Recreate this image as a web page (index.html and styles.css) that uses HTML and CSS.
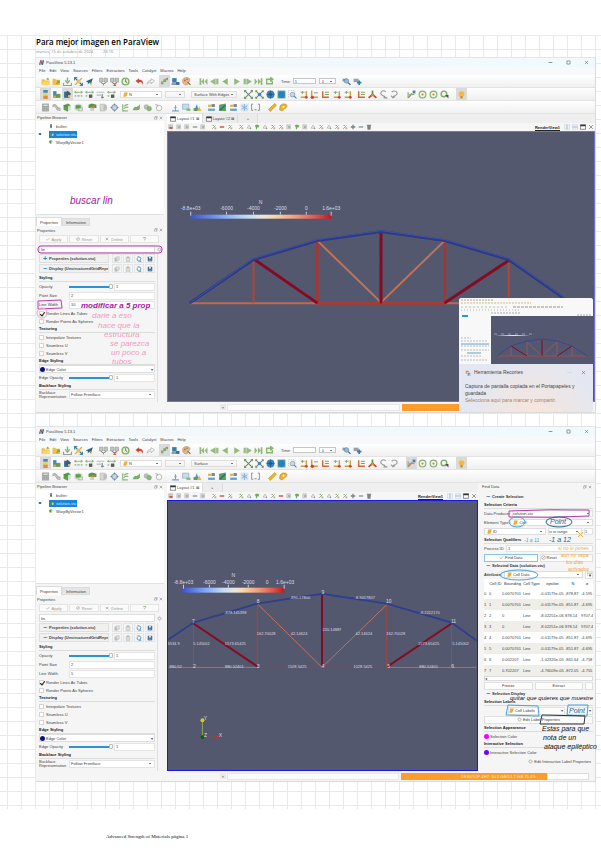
FILE: index.html
```html
<!DOCTYPE html>
<html lang="es">
<head>
<meta charset="utf-8">
<title>Para mejor imagen en ParaView</title>
<link rel="stylesheet" href="styles.css">
</head>
<body>
<svg class="defs" aria-hidden="true">
<defs>
<linearGradient id="coolwarm"><stop offset="0" stop-color="#3b55d0"/><stop offset=".22" stop-color="#7fa5f8"/><stop offset=".4" stop-color="#c3dcf2"/><stop offset=".52" stop-color="#ece6df"/><stop offset=".6" stop-color="#f8d5a8"/><stop offset=".75" stop-color="#f09a78"/><stop offset=".9" stop-color="#dd5145"/><stop offset="1" stop-color="#c41322"/></linearGradient>
<symbol id="i-logo" viewBox="0 0 16 16"><path d="M4 1h3L4 15H0z" fill="#b8342c"/><path d="M8 1h3L8 15H5z" fill="#2c8a3c"/><path d="M12 1h4l-3 14H9z" fill="#1f4e92"/></symbol>
<symbol id="i-open" viewBox="0 0 16 16"><path d="M1 4h5l1 2h8v8H1z" fill="#f3bf3e"/><path d="M1 14l3-6h12l-2 6z" fill="#ffd566"/><path d="M9 5l3-4 3 4z" fill="#7cae58"/></symbol>
<symbol id="i-recent" viewBox="0 0 16 16"><path d="M1 3h5l1 2h7v9H1z" fill="#f3bf3e"/><path d="M8 12l5-5m0 4V7H9" stroke="#76a850" stroke-width="2" fill="none"/></symbol>
<symbol id="i-save" viewBox="0 0 16 16"><path d="M8 1v7M4 6l4 5 4-5" stroke="#8eb07c" stroke-width="2.5" fill="none"/><path d="M1 10v5h14v-5" stroke="#9aa09a" stroke-width="2" fill="none"/></symbol>
<symbol id="i-state" viewBox="0 0 16 16"><path d="M2 2l4 4M14 14l-4-4" stroke="#37729c" stroke-width="2.5"/><path d="M14 2l-4 4M2 14l4-4" stroke="#e6a73b" stroke-width="2.5"/><circle cx="8" cy="8" r="3.5" fill="#f0bd55"/><path d="M1 6V1h5M15 10v5h-5" stroke="#4785aa" fill="none" stroke-width="2"/></symbol>
<symbol id="i-catalyst" viewBox="0 0 16 16"><path d="M1 8l13-6-3 9-3-1-3 3V9z" fill="#2a6180"/><path d="M8 10l3 5 1-7z" fill="#7eb24c"/></symbol>
<symbol id="i-server" viewBox="0 0 16 16"><path d="M1 2h6v7H1zM9 2h6v7H9z" fill="#c3c6c3" stroke="#8b908b"/><path d="M4 9q0 3 4 3t4-3M8 12v3" stroke="#7f857f" fill="none" stroke-width="1.5"/></symbol>
<symbol id="i-serveroff" viewBox="0 0 16 16"><path d="M1 2h6v7H1zM9 2h6v7H9z" fill="#c3c6c3" stroke="#8b908b"/><path d="M4 9q0 3 4 3t4-3" stroke="#7f857f" fill="none" stroke-width="1.5"/><path d="M6 11l5 4m0-4l-5 4" stroke="#c9604e" stroke-width="2"/></symbol>
<symbol id="i-clock" viewBox="0 0 16 16"><circle cx="8" cy="8" r="6" fill="#e8f1e0" stroke="#85ad68" stroke-width="2.5"/><path d="M8 4v4l3 2" stroke="#6c955a" stroke-width="2" fill="none"/></symbol>
<symbol id="i-undo" viewBox="0 0 16 16"><path d="M1 7l6-5v3c6 0 8 3 7 9-1-4-3-5-7-5v3z" fill="#cf4631"/></symbol>
<symbol id="i-redo" viewBox="0 0 16 16"><path d="M15 7L9 3v3C4 6 2 9 2 13c2-3 4-4 7-4v3z" fill="none" stroke="#b5b8b5" stroke-width="1.5"/></symbol>
<symbol id="i-apply" viewBox="0 0 16 16"><path d="M2 8h4V4h5v5H6v4H2z" fill="#82a468"/><path d="M9 3l5-2v5z" fill="#78955e"/></symbol>
<symbol id="i-build" viewBox="0 0 16 16"><path d="M2 2h8v8H2z" fill="#3e7cae"/><path d="M1 14h8v-3H1z" fill="#7a8c9a"/><path d="M9 9h6v5H9z" fill="#3667a0"/></symbol>
<symbol id="i-palette" viewBox="0 0 16 16"><path d="M8 1c5 0 7 3 6 6-1 2-4 1-4 3s1 4-2 4C3 14 1 11 1 7s3-6 7-6z" fill="#e2b98c" stroke="#b88d5e"/><circle cx="5" cy="6" r="1.5" fill="#d65545"/><circle cx="9" cy="4" r="1.5" fill="#5a9b54"/><path d="M10 9l5 5" stroke="#766653" stroke-width="2"/></symbol>
<symbol id="i-first" viewBox="0 0 16 16"><path d="M1 2h3v12H1zM9 2v12L4 8zM15 2v12L10 8z" fill="#8fbb7a"/></symbol>
<symbol id="i-prev" viewBox="0 0 16 16"><path d="M10 2v12L0 8zM11 3h4v10h-4z" fill="#95bd82"/></symbol>
<symbol id="i-back" viewBox="0 0 16 16"><path d="M12 2v12L2 8z" fill="#8fbb7a"/></symbol>
<symbol id="i-play" viewBox="0 0 16 16"><path d="M4 2v12l10-6z" fill="#8fbb7a"/></symbol>
<symbol id="i-next" viewBox="0 0 16 16"><path d="M6 2v12l10-6zM1 3h4v10H1z" fill="#95bd82"/></symbol>
<symbol id="i-last" viewBox="0 0 16 16"><path d="M12 2h3v12h-3zM7 2v12l5-6zM1 2v12l5-6z" fill="#8fbb7a"/></symbol>
<symbol id="i-loop" viewBox="0 0 16 16"><path d="M12 4H3v8h10V7M10 1v6l4-3z" stroke="#8ab374" stroke-width="2.5" fill="none"/></symbol>
<symbol id="i-zoomcam" viewBox="0 0 16 16"><path d="M1 3h8v5H1z" fill="#8d9aa4"/><circle cx="8" cy="7" r="4" fill="#8ebbd8" stroke="#5e7d93"/><path d="M11 10l4 4" stroke="#3f6e98" stroke-width="2.5"/></symbol>
<symbol id="i-zoomadd" viewBox="0 0 16 16"><path d="M1 3h9v6H1z" fill="#95a3ad"/><path d="M11 6v8M7 10h8" stroke="#377db5" stroke-width="3"/></symbol>
<symbol id="i-legend" viewBox="0 0 16 16"><path d="M4 0h8v5H4z" fill="#3f8bc8"/><path d="M4 5h8v5H4z" fill="#e7d45c"/><path d="M4 10h8v6H4z" fill="#e28b3c"/></symbol>
<symbol id="i-mapedit" viewBox="0 0 16 16"><path d="M2 2h6v12H2z" fill="#4288c0"/><path d="M6 7h9v7H6z" fill="#6d9a4a"/><path d="M2 10h5v4H2z" fill="#dba940"/></symbol>
<symbol id="i-mapcopy" viewBox="0 0 16 16"><path d="M2 3h9v11H2z" fill="#346a9c"/><path d="M7 1l7 5-3 8-5-5z" fill="#4b5663"/><path d="M9 9h4v4H9z" fill="#e5c25b"/></symbol>
<symbol id="i-range" viewBox="0 0 16 16"><path d="M1 4h14M4 2L1 4l3 2M12 2l3 2-3 2" stroke="#7daa70" stroke-width="1.5" fill="none"/><path d="M1 9h3v3H1zM6 9h4v3H6zM12 9h3v3h-3z" fill="#a6bd9c"/></symbol>
<symbol id="i-rangec" viewBox="0 0 16 16"><path d="M1 4h14M4 2L1 4l3 2M12 2l3 2-3 2" stroke="#84a878" stroke-width="1.5" fill="none"/><path d="M1 9h3v3H1z" fill="#a6bd9c"/><path d="M7 8h6v6H7z" fill="#555e5a"/></symbol>
<symbol id="i-ranget" viewBox="0 0 16 16"><path d="M1 4h14M1 9h8" stroke="#b6beb4" stroke-width="2"/><path d="M11 7v8M9 13h5" stroke="#7b8b95" stroke-width="2"/></symbol>
<symbol id="i-cell" viewBox="0 0 16 16"><path d="M5 2h9l-2 9-3 3H2l2-9z" fill="#f2b431" stroke="#c88c1d"/></symbol>
<symbol id="i-reset" viewBox="0 0 16 16"><path d="M2 2l12 12M14 2L2 14" stroke="#777f77" stroke-width="1.8"/><path d="M1 4V1h3M12 1h3v3M1 12v3h3M15 12v3h-3" stroke="#69a456" stroke-width="2" fill="none"/></symbol>
<symbol id="i-resetb" viewBox="0 0 16 16"><path d="M2 2l12 12M14 2L2 14" stroke="#6f7d7d" stroke-width="1.8"/><path d="M1 4V1h3M12 1h3v3M1 12v3h3M15 12v3h-3" stroke="#69a456" stroke-width="1.5" fill="none"/><circle cx="8" cy="8" r="3" fill="#3f86c1"/></symbol>
<symbol id="i-globe" viewBox="0 0 16 16"><circle cx="8" cy="8" r="7" fill="#3584bd"/><path d="M8 1v14M1 8h14" stroke="#255f8b" stroke-width="1.5"/><circle cx="8" cy="8" r="2.5" fill="#1d587f"/></symbol>
<symbol id="i-box" viewBox="0 0 16 16"><path d="M1 1h14v14H1z" fill="#5c9e91"/><circle cx="8" cy="8" r="6" fill="#287fc3"/></symbol>
<symbol id="i-rubber" viewBox="0 0 16 16"><path d="M1 1h11v11H1z" fill="none" stroke="#9aa5a5" stroke-dasharray="2"/><circle cx="8" cy="8" r="4" fill="#c8dae6" stroke="#6c8494"/><path d="M11 11l4 4" stroke="#4f84aa" stroke-width="2"/></symbol>
<symbol id="i-axr" viewBox="0 0 16 16"><path d="M13 2v11H3" stroke="#d0a037" stroke-width="2.5" fill="none"/><path d="M3 4h7M6 2v5" stroke="#75996a" stroke-width="1.5"/><circle cx="13" cy="13" r="2.5" fill="#cb4333"/></symbol>
<symbol id="i-axl" viewBox="0 0 16 16"><path d="M3 1v12h11" stroke="#d39b39" stroke-width="2.5" fill="none"/><path d="M7 5h7" stroke="#768f68" stroke-width="1.5"/><circle cx="4" cy="13" r="3" fill="#cb3f2f"/></symbol>
<symbol id="i-axy" viewBox="0 0 16 16"><path d="M3 2v11h11" stroke="#cb6a36" stroke-width="2.5" fill="none"/><path d="M7 4h7M7 8h7" stroke="#87a05f" stroke-width="2"/></symbol>
<symbol id="i-iso" viewBox="0 0 16 16"><path d="M8 8V1" stroke="#589a4a" stroke-width="3"/><path d="M8 8l7 6M8 8l-7 6" stroke="#c94830" stroke-width="3"/><path d="M5 11h6L8 6z" fill="#d69b36"/></symbol>
<symbol id="i-rotl" viewBox="0 0 16 16"><path d="M12 3C7-1 1 4 4 8s6 2 7 5M8 14h7" stroke="#929a92" stroke-width="2" fill="none"/></symbol>
<symbol id="i-rotr" viewBox="0 0 16 16"><path d="M3 4c5-5 12 0 9 4s-6 2-7 5M2 10l3 4 4-2" stroke="#9aa29a" stroke-width="2" fill="none"/></symbol>
<symbol id="i-axes" viewBox="0 0 16 16"><path d="M2 14l7-8" stroke="#ca7045" stroke-width="2.5"/><path d="M2 14V4M4 8h9" stroke="#86a972" stroke-width="2"/><path d="M10 1h5v5h-5z" fill="#567ba0"/></symbol>
<symbol id="i-center" viewBox="0 0 16 16"><circle cx="8" cy="8" r="6" fill="#eef4e8" stroke="#87ae72" stroke-width="2"/><circle cx="8" cy="8" r="2" fill="#d5864d"/></symbol>
<symbol id="i-pick" viewBox="0 0 16 16"><circle cx="7" cy="7" r="5" fill="#f2f6ee" stroke="#80ab6b" stroke-width="2.5"/><path d="M9 9h6v6z" fill="#45535a"/></symbol>
<symbol id="i-bulb" viewBox="0 0 16 16"><circle cx="8" cy="7" r="5" fill="#f3bc38"/><path d="M6 11h4v4H6z" fill="#b78c37"/><path d="M8 0v3M1 7h3M12 7h3" stroke="#f5d173" stroke-width="1.5"/></symbol>
<symbol id="i-calc" viewBox="0 0 16 16"><path d="M2 1h12v14H2z" fill="#9aa09c"/><path d="M4 3h8v2H4z" fill="#edf0ec"/><path d="M4 8h8M4 11h8M4 14h8" stroke="#d8ddd8" stroke-dasharray="2 1"/></symbol>
<symbol id="i-contour" viewBox="0 0 16 16"><path d="M1 3q5-3 8 2t6 3v6q-6 1-8-4T1 8z" fill="#a7aca8"/><path d="M3 5q5 0 6 4t5 3" stroke="#e0e3e0" fill="none"/></symbol>
<symbol id="i-clip" viewBox="0 0 16 16"><path d="M1 4l8-3 5 3-6 11-7-3z" fill="#5da050"/><path d="M8 6l6-2v8l-6 3z" fill="#d4dfd0"/><path d="M1 4l7 2v9" stroke="#39792f" fill="none"/></symbol>
<symbol id="i-slice" viewBox="0 0 16 16"><path d="M1 4l7-3 7 3v8l-7 3-7-3z" fill="#cbd8c7"/><path d="M3 4h9v6H3z" fill="#57a144"/><path d="M9 9h6v5H9z" fill="#dfe7dc" stroke="#93a391"/></symbol>
<symbol id="i-thresh" viewBox="0 0 16 16"><path d="M1 3l6-2 8 2v6H1z" fill="#4f9a42"/><path d="M4 8h7v6H4z" fill="#c8cfc5"/><path d="M7 5h5v4H7z" fill="#cc7c55"/></symbol>
<symbol id="i-extract" viewBox="0 0 16 16"><path d="M2 2h9v12H2z" fill="#d6d9d6" stroke="#a8ada8"/><path d="M8 4h6v8H8z" fill="#b8beb8"/></symbol>
<symbol id="i-glyph" viewBox="0 0 16 16"><circle cx="8" cy="8" r="5" fill="#c8d5df" stroke="#7a95a9" stroke-width="1.5"/><path d="M8 0l2 4H6zM8 16l2-4H6zM0 8l4-2v4zM16 8l-4-2v4z" fill="#6c8ca5"/></symbol>
<symbol id="i-stream" viewBox="0 0 16 16"><path d="M3 2v12h9M5 6q4-4 8-3M5 10q4-4 8-2" stroke="#8ab37c" stroke-width="2" fill="none"/></symbol>
<symbol id="i-warp" viewBox="0 0 16 16"><path d="M1 13q3-7 6-6t7-5v8q-2 3-6 3z" fill="#7eab6c"/></symbol>
<symbol id="i-group" viewBox="0 0 16 16"><circle cx="6" cy="7" r="4" fill="#b6cbae" stroke="#8ca083"/><circle cx="11" cy="10" r="4" fill="#8db77e" stroke="#7e9876"/></symbol>
<symbol id="i-level" viewBox="0 0 16 16"><circle cx="9" cy="9" r="5" fill="none" stroke="#b2b6b2" stroke-width="1.5"/><path d="M2 3h4v4" stroke="#a5b6a0" stroke-width="1.5" fill="none"/></symbol>
<symbol id="i-probe" viewBox="0 0 16 16"><path d="M2 14h12M8 14V4M6 8h4" stroke="#73a5c7" stroke-width="1.8"/></symbol>
<symbol id="i-plot" viewBox="0 0 16 16"><path d="M1 2h11v9H1z" fill="#c8dcea" stroke="#7ba1bd"/><path d="M8 10h7v4H8z" fill="#84b573"/></symbol>
<symbol id="i-hist" viewBox="0 0 16 16"><path d="M2 14L7 2l3 12z" fill="#3d8fcb"/><path d="M7 14l4-8 4 8z" fill="#e3b83f"/><path d="M1 14h5V9H1z" fill="#5fa04d"/></symbol>
<symbol id="i-time" viewBox="0 0 16 16"><path d="M2 10h12v4H2z" fill="#66a1c9"/><path d="M2 3h5v4H2z" fill="#deb04d"/><path d="M8 2h6v5H8z" fill="#7b7f80"/></symbol>
<symbol id="i-sel" viewBox="0 0 16 16"><path d="M2 3l12-2v13H2z" fill="#59a05b"/><path d="M3 13L13 4" stroke="#2b6a8b" stroke-width="2.5"/></symbol>
<symbol id="i-snow" viewBox="0 0 16 16"><path d="M1 1h14v14H1z" fill="#d7e5f0"/><path d="M8 2v12M3 5l10 6M13 5L3 11" stroke="#7aa9d0" stroke-width="1.5"/></symbol>
<symbol id="i-braces" viewBox="0 0 16 16"><path d="M4 2H1v11h3M12 2h3v11h-3M6 12h4" stroke="#77898f" stroke-width="1.5" fill="none"/></symbol>
<symbol id="i-ruler" viewBox="0 0 16 16"><path d="M1 11L12 1l3 3L4 15z" fill="#f0b429" stroke="#b98717"/></symbol>
<symbol id="i-protr" viewBox="0 0 16 16"><path d="M2 5q4-5 10-3 4 3 1 6l-8 6-4-2z" fill="#efb22b" stroke="#b98717"/><circle cx="8" cy="7" r="2" fill="#fff4d0"/></symbol>
<symbol id="i-sgrey" viewBox="0 0 16 16"><path d="M2 2h10v11H2z" fill="#dedede" stroke="#999"/><path d="M5 5h6v6H5z" fill="#a9b3ae"/></symbol>
<symbol id="i-sred" viewBox="0 0 16 16"><path d="M2 2h10v11H2z" fill="#d9c8c5" stroke="#998"/><path d="M4 8h8v5H4z" fill="#c3574c"/></symbol>
<symbol id="i-sbar" viewBox="0 0 16 16"><path d="M2 6h12v4H2z" fill="#95a0a5"/></symbol>
<symbol id="i-sminus" viewBox="0 0 16 16"><path d="M2 6h12v4H2z" fill="#c75d4c"/></symbol>
<symbol id="i-splus" viewBox="0 0 16 16"><path d="M8 2v12M2 8h12" stroke="#76858d" stroke-width="3.5"/></symbol>
<symbol id="i-sgreen" viewBox="0 0 16 16"><path d="M2 4l6-3 6 3-2 5H8v5H5V9z" fill="#6dac5c"/></symbol>
<symbol id="i-sarrow" viewBox="0 0 16 16"><path d="M3 13L12 4M4 4h4" stroke="#93b183" stroke-width="2.5"/><path d="M9 9h5v5H9z" fill="#c7aa9b"/></symbol>
<symbol id="i-sdots" viewBox="0 0 16 16"><path d="M3 11L8 3l5 8z" fill="none" stroke="#a0ad9b" stroke-width="1.8"/><circle cx="12" cy="12" r="2" fill="#8f9a8a"/></symbol>
<symbol id="i-strash" viewBox="0 0 16 16"><path d="M3 4h10l-1 11H4zM2 2h12v2H2z" fill="#7d8482"/></symbol>
<symbol id="i-copy" viewBox="0 0 16 16"><path d="M2 5h7v9H2z" fill="#c3c6c4" stroke="#a5a9a7"/><path d="M6 2h8v9H6z" fill="#dfe0e0" stroke="#a5a9a7"/></symbol>
<symbol id="i-paste" viewBox="0 0 16 16"><path d="M3 3h10v12H3z" fill="#d8dada" stroke="#a8acaa"/><path d="M6 1h4v4H6z" fill="#aeb2b0"/></symbol>
<symbol id="i-reload" viewBox="0 0 16 16"><path d="M4 2q8-1 9 5 0 6-5 7-6-1-5-7l2-3M9 14h5" stroke="#3b88bd" stroke-width="2.2" fill="none"/></symbol>
<symbol id="i-disk" viewBox="0 0 16 16"><path d="M2 2h12v12H2z" fill="#2d618f"/><path d="M5 2h6v5H5z" fill="#dbe6ef"/><path d="M4 9h8v5H4z" fill="#6c93b1"/></symbol>
<symbol id="i-eye" viewBox="0 0 16 16"><path d="M1 8q7-8 14 0-7 8-14 0z" fill="#4387ae"/><circle cx="8" cy="8" r="3" fill="#123b56"/></symbol>
<symbol id="i-srv" viewBox="0 0 16 16"><path d="M4 1h8v14H4z" fill="#666c6b"/><path d="M5 4h6M5 7h6" stroke="#e8e8e8"/></symbol>
<symbol id="i-gear" viewBox="0 0 16 16"><circle cx="8" cy="8" r="5" fill="none" stroke="#a4a8a8" stroke-width="3" stroke-dasharray="2 1"/><circle cx="8" cy="8" r="4" fill="none" stroke="#a4a8a8"/></symbol>
<symbol id="i-win" viewBox="0 0 16 16"><path d="M1 2h14v12H1z" fill="#fff" stroke="#333" stroke-width="1.5"/><path d="M1 2h14v4H1z" fill="#333"/></symbol>
<symbol id="i-float" viewBox="0 0 16 16"><path d="M2 5h8v8H2zM5 5V2h8v8h-3" fill="none" stroke="#777" stroke-width="1.5"/></symbol>
<symbol id="i-x" viewBox="0 0 16 16"><path d="M3 3l10 10M13 3L3 13" stroke="#666" stroke-width="1.8"/></symbol>
<symbol id="i-min" viewBox="0 0 16 16"><path d="M2 8h12" stroke="#555" stroke-width="2"/></symbol>
<symbol id="i-max" viewBox="0 0 16 16"><path d="M3 3h10v10H3z" fill="none" stroke="#555" stroke-width="1.8"/></symbol>
<symbol id="i-split" viewBox="0 0 16 16"><path d="M1 2h14v12H1z" fill="#edf2fa" stroke="#aebcd2"/><path d="M8 2v12" stroke="#8ea5c8" stroke-width="2"/></symbol>
<symbol id="i-splitv" viewBox="0 0 16 16"><path d="M1 2h14v12H1z" fill="#edf2fa" stroke="#aebcd2"/><path d="M1 8h14" stroke="#8ea5c8" stroke-width="2"/></symbol>
<symbol id="i-no" viewBox="0 0 16 16"><circle cx="8" cy="8" r="6" fill="none" stroke="#999" stroke-width="1.8"/><path d="M4 12l8-8" stroke="#999" stroke-width="1.8"/></symbol>
<symbol id="i-ok" viewBox="0 0 16 16"><path d="M2 8l4 5 8-10" fill="none" stroke="#8aa392" stroke-width="2"/></symbol>
<symbol id="i-snip" viewBox="0 0 16 16"><path d="M2 2h8v3H5v5H2z" fill="#e58a3c"/><path d="M7 7h7v3h-4v5H7z" fill="#3f8fc9"/><circle cx="13" cy="13" r="2" fill="#58a9c9"/></symbol>
</defs>
</svg>

<main class="sheet">
<header class="note-head">
<h1>Para mejor imagen en ParaView</h1>
<p><time>martes, 15 de octubre de 2024</time><time>23:16</time></p>
</header>

<section class="window" aria-label="ParaView 5.13.1">
<div class="titlebar"><svg><use href="#i-logo"/></svg><span>ParaView 5.13.1</span><div class="wincontrols" data-icons="min max x"></div></div>
<nav class="menu"><a href="#">File</a><a href="#">Edit</a><a href="#">View</a><a href="#">Sources</a><a href="#">Filters</a><a href="#">Extractors</a><a href="#">Tools</a><a href="#">Catalyst</a><a href="#">Macros</a><a href="#">Help</a></nav>
<div class="toolbar">
<div class="icons" data-icons="open recent save state catalyst | server serveroff clock | undo redo | apply* build palette || first prev back play next last loop ||"></div>
<label class="time">Time: <input value="1"></label><select class="s-step" aria-label="Paso"><option>0</option></select>
<div class="icons" data-icons="| zoomcam zoomadd"></div>
</div>
<div class="toolbar">
<div class="icons" data-icons="legend* mapedit mapcopy* range rangec ranget rangec |"></div>
<span class="with-icon s-array"><svg><use href="#i-cell"/></svg><select aria-label="Variable"><option>N</option></select></span>
<select class="s-comp" aria-label="Componente"><option></option></select>
<select class="s-repr" aria-label="Representación"><option>Surface With Edges</option></select>
<div class="icons" data-icons="|| reset resetb globe box rubber axr axl axy axr axr | axy iso rotl rotr || axes center center pick || bulb*"></div>
</div>
<div class="toolbar">
<div class="icons" data-icons="calc contour clip slice | thresh extract glyph stream warp group level || probe plot hist | time sel time snow braces || ruler protr"></div>
</div>
<div class="work">
<aside class="side">
<div class="dock">Pipeline Browser<svg><use href="#i-float"/></svg><svg><use href="#i-x"/></svg></div>
<ul class="tree">
<li><i></i><svg><use href="#i-srv"/></svg><span>builtin:</span></li>
<li class="on"><svg><use href="#i-eye"/></svg><b><svg><use href="#i-clip"/></svg>solution.vtu</b></li>
<li><i></i><svg><use href="#i-clip"/></svg><span>WarpByVector1</span></li>
</ul>
<div class="tabs"><button class="on">Properties</button><button>Information</button></div>
<div class="dock low">Properties<svg><use href="#i-float"/></svg><svg><use href="#i-x"/></svg></div>
<div class="actions"><button><svg><use href="#i-ok"/></svg>Apply</button><button><svg><use href="#i-no"/></svg>Reset</button><button><svg><use href="#i-x"/></svg>Delete</button><button class="help">?</button></div>
<div class="search"><input aria-label="Buscar" value="lin"><button aria-label="Avanzado"><svg><use href="#i-gear"/></svg></button></div>
<form class="props">
<div class="sect"><button type="button"><em>+</em>Properties (solution.vtu)</button><div data-icons="copy paste reload disk"></div></div>
<div class="sect"><button type="button"><em>−</em>Display (UnstructuredGridRepres</button><div data-icons="copy paste reload disk"></div></div>
<h3>Styling</h3>
<div class="row"><label for="op1">Opacity</label><input id="op1" type="range" value="100"><input aria-label="Valor" value="1"></div>
<div class="row wide"><label for="ps1">Point Size</label><input id="ps1" value="2"></div>
<div class="row wide"><label for="lw1">Line Width</label><input id="lw1" value="10"></div>
<label class="check"><input type="checkbox" checked>Render Lines As Tubes</label>
<label class="check"><input type="checkbox">Render Points As Spheres</label>
<h3>Texturing</h3>
<label class="check"><input type="checkbox">Interpolate Textures</label>
<label class="check"><input type="checkbox">Seamless U</label>
<label class="check"><input type="checkbox">Seamless V</label>
<h3>Edge Styling</h3>
<button type="button" class="color"><i></i>Edge Color<span>▾</span></button>
<div class="row"><label for="eo1">Edge Opacity</label><input id="eo1" type="range" value="100"><input aria-label="Valor" value="1"></div>
<h3>Backface Styling</h3>
<div class="row wide"><label for="bf1">Backface Representation</label><select id="bf1"><option>Follow Frontface</option></select></div>
</form>
<svg class="ink ink-left" viewBox="36 113 128 290">
<text x="70" y="203" class="mag big">buscar lin</text>
<rect x="38" y="245" width="124" height="7" rx="3" class="l-mag"/>
<path d="M38 300l23-1 1 8-24 1z" class="l-mag"/>
<text x="81" y="307" class="mag bold">modificar a 5 prop</text>
<ellipse cx="42" cy="312" rx="5" ry="5" class="l-pink"/>
<text x="92" y="317" class="pink">darle a eso</text><text x="98" y="327" class="pink">hace que la</text><text x="104" y="336" class="pink">estructura</text><text x="110" y="345" class="pink">se parezca</text><text x="111" y="354" class="pink">un poco a</text><text x="112" y="363" class="pink">tubos</text>
</svg>
</aside>
<div class="center">
<div class="layouts"><button class="on"><svg><use href="#i-win"/></svg>Layout #1 ⊠</button><button><svg><use href="#i-win"/></svg>Layout #2 ⊠</button><button>+</button></div>
<div class="viewbar"><div class="small" data-icons="sred sgrey sgrey sbar sgrey | sarrow sminus sarrow | sarrow sdots sgreen sdots sarrow sarrow sgrey sgreen sgrey sdots sarrow sdots sarrow sarrow splus sbar strash"></div><b>RenderView1</b><div class="small" data-icons="split splitv win x"></div></div>
<div class="view">
<svg viewBox="168 131 426 270">
<g class="scale"><rect x="190" y="214" width="141" height="4" fill="url(#coolwarm)"/><path d="M190 211v4M226 211v3M253 211v3M280 211v3M306 211v3M331 211v4" stroke="#c9ccd6"/>
<text x="260" y="203">N</text><text x="190" y="209">-8.8e+03</text><text x="226" y="209">-6000</text><text x="253" y="209">-4000</text><text x="280" y="209">-2000</text><text x="306" y="209">0</text><text x="331" y="209">1.6e+03</text></g>
<g fill="none" stroke-linecap="round">
<path d="M190 303h127M445 303h127" stroke="#bd6a53" stroke-width="2"/>
<path d="M317 303h128" stroke="#a53c36" stroke-width="3"/>
<path d="M253 259v43M509 260v42" stroke="#b04638" stroke-width="2"/>
<path d="M317 240v62M445 240v62" stroke="#a33832" stroke-width="3"/>
<path d="M317 240l64 62 64-62" stroke="#c2715a" stroke-width="2"/>
<path d="M254 259l62 43M509 260l-63 42M381 232v70" stroke="#850b22" stroke-width="3"/>
<path d="M190 302l63-43 64-19 64-9 64 9 64 19 63 44" stroke="#2c3a83" stroke-width="3"/>
<path d="M190 302l63-44 64-19 64-9 64 9 64 19 63 44" stroke="#4051aa" stroke-width="1"/>
</g>
</svg>
</div>
</div>
</div>
<div class="status"><button aria-label="Cerrar">×</button><div class="track"></div><div class="memory full"></div></div>
<div class="toast" role="status">
<svg class="thumb" viewBox="0 0 134 66" preserveAspectRatio="none">
<path d="M0 0h134v66H0z" fill="#f8f8f9"/><path d="M32 18h102v48H32z" fill="#53576f"/>
<g fill="none" stroke-width="1"><path d="M2 5h70" stroke="#d7b97f" stroke-dasharray="2 1"/><path d="M2 9h48" stroke="#b9c4a6" stroke-dasharray="2 2"/><path d="M54 9h50" stroke="#b78f6f" stroke-dasharray="3 1"/><path d="M2 12h60" stroke="#a6bfac" stroke-dasharray="1 2"/><path d="M2 2h32M32 15h30M118 17h14" stroke="#aaa" stroke-dasharray="2 1"/><path d="M2 40h10M2 43h26M2 48h28M2 52h28M2 58h20M2 62h26" stroke="#b9bdc4" stroke-dasharray="2 1"/><path d="M2 46h28M8 55h14" stroke="#58a4d6"/></g>
<path d="M3 17h6v2H3z" fill="#2b94dc"/><path d="M36 37h36v1H36z" fill="url(#coolwarm)"/><path d="M35 36h38" stroke="#c5c9d5" stroke-dasharray="3 4" stroke-width=".6"/>
<g fill="none"><path d="M38 58h90" stroke="#a75149"/><path d="M52 48v10M68 44v14M98 44v14M113 48v10M68 44l15 14 15-14" stroke="#a25e59" stroke-width=".7"/><path d="M52 48l16 10M113 48L98 58M83 42v16" stroke="#850b22"/><path d="M38 58l14-10 16-5 15-2 15 2 15 5 15 10" stroke="#394791"/></g>
</svg>
<div class="toast-head"><svg><use href="#i-snip"/></svg><span>Herramienta Recortes</span><small>···</small><button aria-label="Cerrar aviso"><svg><use href="#i-x"/></svg></button></div>
<p>Captura de pantalla copiada en el Portapapeles y guardada</p>
<p class="hint">Selecciona aquí para marcar y compartir.</p>
</div>
</section>

<section class="window strong" aria-label="ParaView 5.13.1">
<div class="titlebar"><svg><use href="#i-logo"/></svg><span>ParaView 5.13.1</span><div class="wincontrols" data-icons="min max x"></div></div>
<nav class="menu"><a href="#">File</a><a href="#">Edit</a><a href="#">View</a><a href="#">Sources</a><a href="#">Filters</a><a href="#">Extractors</a><a href="#">Tools</a><a href="#">Catalyst</a><a href="#">Macros</a><a href="#">Help</a></nav>
<div class="toolbar">
<div class="icons" data-icons="open recent save state catalyst | server serveroff clock | undo redo | apply* build palette || first prev back play next last loop ||"></div>
<label class="time">Time: <input value=""></label><select class="s-step" aria-label="Paso"><option>0</option></select>
<div class="icons" data-icons="| zoomcam zoomadd"></div>
</div>
<div class="toolbar">
<div class="icons" data-icons="legend* mapedit mapcopy range rangec ranget rangec |"></div>
<span class="with-icon s-array"><svg><use href="#i-cell"/></svg><select aria-label="Variable"><option>N</option></select></span>
<select class="s-comp" aria-label="Componente"><option></option></select>
<select class="s-repr" aria-label="Representación"><option>Surface</option></select>
<div class="icons" data-icons="|| reset resetb globe box rubber axr axl axy axr axr | axy iso rotl rotr || axes* center center pick || bulb*"></div>
</div>
<div class="toolbar">
<div class="icons" data-icons="calc contour clip slice | thresh extract glyph stream warp group level || probe plot hist | time sel time snow braces || ruler protr"></div>
</div>
<div class="work">
<aside class="side">
<div class="dock">Pipeline Browser<svg><use href="#i-float"/></svg><svg><use href="#i-x"/></svg></div>
<ul class="tree">
<li><i></i><svg><use href="#i-srv"/></svg><span>builtin:</span></li>
<li class="on"><svg><use href="#i-eye"/></svg><b><svg><use href="#i-clip"/></svg>solution.vtu</b></li>
<li><i></i><svg><use href="#i-clip"/></svg><span>WarpByVector1</span></li>
</ul>
<div class="tabs"><button class="on">Properties</button><button>Information</button></div>
<div class="dock low">Properties<svg><use href="#i-float"/></svg><svg><use href="#i-x"/></svg></div>
<div class="actions"><button><svg><use href="#i-ok"/></svg>Apply</button><button><svg><use href="#i-no"/></svg>Reset</button><button><svg><use href="#i-x"/></svg>Delete</button><button class="help">?</button></div>
<div class="search"><input aria-label="Buscar" value="lin"><button aria-label="Avanzado"><svg><use href="#i-gear"/></svg></button></div>
<form class="props">
<div class="sect"><button type="button"><em>−</em>Properties (solution.vtu)</button><div data-icons="copy paste reload disk"></div></div>
<div class="sect"><button type="button"><em>−</em>Display (UnstructuredGridRepres</button><div data-icons="copy paste reload disk"></div></div>
<h3>Styling</h3>
<div class="row"><label for="op2">Opacity</label><input id="op2" type="range" value="100"><input aria-label="Valor" value="1"></div>
<div class="row wide"><label for="ps2">Point Size</label><input id="ps2" value="2"></div>
<div class="row wide"><label for="lw2">Line Width</label><input id="lw2" value="5"></div>
<label class="check"><input type="checkbox" checked>Render Lines As Tubes</label>
<label class="check"><input type="checkbox">Render Points As Spheres</label>
<h3>Texturing</h3>
<label class="check"><input type="checkbox">Interpolate Textures</label>
<label class="check"><input type="checkbox">Seamless U</label>
<label class="check"><input type="checkbox">Seamless V</label>
<h3>Edge Styling</h3>
<button type="button" class="color"><i></i>Edge Color<span>▾</span></button>
<div class="row"><label for="eo2">Edge Opacity</label><input id="eo2" type="range" value="100"><input aria-label="Valor" value="1"></div>
<h3>Backface Styling</h3>
<div class="row wide"><label for="bf2">Backface Representation</label><select id="bf2"><option>Follow Frontface</option></select></div>
</form>
</aside>
<div class="center">
<div class="layouts"><button class="on"><svg><use href="#i-win"/></svg>Layout #1 ⊠</button><button>+</button></div>
<div class="viewbar"><div class="small" data-icons="sred sgrey sgrey sbar sgrey | sarrow sminus sarrow | sarrow sdots sgreen sdots sarrow sminus sgrey sgreen sgrey sdots sarrow sdots sarrow sarrow splus sbar strash"></div><b>RenderView1</b><div class="small" data-icons="split splitv win x"></div></div>
<div class="view">
<svg viewBox="168 501 309 270">
<g class="scale"><rect x="182" y="588" width="102" height="5" fill="url(#coolwarm)"/><path d="M183 585v4M209 585v3M228 585v3M248 585v3M284 585v4" stroke="#c9ccd6"/>
<text x="233" y="577">N</text><text x="183" y="584">-8.8e+03</text><text x="209" y="584">-6000</text><text x="228" y="584">-4000</text><text x="248" y="584">-2000</text><text x="267" y="584">0</text><text x="285" y="584">1.6e+03</text></g>
<g fill="none">
<path d="M168 668h90M388 668h89" stroke="#bd6a53" stroke-width="1"/>
<path d="M258 668h130" stroke="#a53c36" stroke-width="1"/>
<path d="M193 624v44M452 624v44M257 605v63M387 605v63" stroke="#ab4539" stroke-width="1"/>
<path d="M258 605l64 63 65-63" stroke="#c2715a" stroke-width="1"/>
<path d="M193 624l64 43M452 624l-64 43M322 595v72" stroke="#850b22" stroke-width="2"/>
<path d="M168 640l25-17 64-19 65-10 65 10 65 19 25 18" stroke="#2f3e90" stroke-width="2"/>
</g>
<g class="vals"><text x="235" y="614">-878.145398</text><text x="300" y="599">-890.17800</text><text x="365" y="599">-8.9017807</text><text x="430" y="614">-8.2222170</text><text x="173" y="646">3534.9</text><text x="201" y="646">5.145002</text><text x="235" y="646">1573.65425</text><text x="266" y="636">162.70028</text><text x="299" y="636">42.14624</text><text x="332" y="631">220.14887</text><text x="364" y="636">42.14624</text><text x="396" y="636">162.70028</text><text x="429" y="646">1573.65425</text><text x="461" y="646">5.145002</text><text x="175" y="669">880.52</text><text x="234" y="669">880.52401</text><text x="297" y="669">1528.5425</text><text x="363" y="669">1528.5425</text><text x="429" y="669">880.52401</text></g>
<g class="ids"><text x="193" y="623">7</text><text x="258" y="603">8</text><text x="323" y="594">9</text><text x="389" y="603">10</text><text x="454" y="623">11</text><text x="194" y="669">2</text><text x="258" y="669">3</text><text x="323" y="669">4</text><text x="389" y="669">5</text><text x="453" y="669">6</text></g>
<path d="M202 737v-16" stroke="#8ba650"/><path d="M202 738h16" stroke="#bd3838" stroke-dasharray="2 1"/><circle cx="202" cy="738" r="2" fill="#0c5a1c"/><circle cx="202" cy="721" r="2" fill="#d9c42f"/><path d="M216 736l4 2-4 2z" fill="#d02c2c"/>
<g class="ids"><text x="205" y="721">Y</text><text x="205" y="738">Z</text><text x="220" y="738">X</text></g>
</svg>
</div>
</div>
<aside class="find">
<div class="dock">Find Data<svg><use href="#i-float"/></svg><svg><use href="#i-x"/></svg></div>
<h2><em>−</em>Create Selection</h2>
<h3>Selection Criteria</h3>
<div class="line"><label for="dp">Data Producer</label><select id="dp"><option>solution.vtu</option></select></div>
<div class="line"><label for="et">Element Type</label><span class="with-icon"><svg><use href="#i-cell"/></svg><select id="et"><option>Cell</option></select></span></div>
<div class="line"><span class="with-icon"><svg><use href="#i-cell"/></svg><select aria-label="Campo"><option>ID</option></select></span><select class="rng" aria-label="Operador"><option>is in range</option></select><input class="tiny" aria-label="Mínimo" value="1"></div>
<h3>Selection Qualifiers</h3>
<div class="line"><label for="pid">Process ID</label><input id="pid" value="-1"></div>
<div class="line btns"><button class="hot"><svg><use href="#i-ok"/></svg>Find Data</button><button class="reset"><svg><use href="#i-no"/></svg>Reset</button></div>
<h2><em>−</em>Selected Data (solution.vtu)</h2>
<div class="line"><label for="at"><b>Attribute:</b></label><span class="with-icon"><svg><use href="#i-cell"/></svg><select id="at"><option>Cell Data</option></select></span><button class="sq" aria-label="Columnas"><svg><use href="#i-rangec"/></svg></button></div>
<div class="tablebox"><table>
<thead><tr><th></th><th>Cell ID</th><th>Bounding</th><th>Cell Type</th><th>epsilon</th><th>N</th><th>σ</th></tr></thead>
<tbody>
<tr><td>0</td><td>0</td><td>0.0070701</td><td>Line</td><td>-0.01179e-05</td><td>-878.87</td><td>-4.595</td></tr>
<tr><td>1</td><td>1</td><td>0.0070701</td><td>Line</td><td>-0.01179e-05</td><td>-851.87</td><td>-4.695</td></tr>
<tr><td>2</td><td>2</td><td>0</td><td>Line</td><td>-8.02251e-06</td><td>878.14</td><td>9707.4</td></tr>
<tr><td>3</td><td>3</td><td>0</td><td>Line</td><td>-8.02251e-06</td><td>878.14</td><td>9707.4</td></tr>
<tr><td>4</td><td>4</td><td>0.0070701</td><td>Line</td><td>-0.01179e-05</td><td>-851.87</td><td>-4.695</td></tr>
<tr><td>5</td><td>5</td><td>0.0070701</td><td>Line</td><td>-0.01179e-05</td><td>-851.87</td><td>-4.695</td></tr>
<tr><td>6</td><td>6</td><td>0.002207</td><td>Line</td><td>-1.02320e-05</td><td>-841.64</td><td>-4.758</td></tr>
<tr><td>7</td><td>7</td><td>0.702207</td><td>Line</td><td>-4.76009e-05</td><td>-872.05</td><td>-4.755</td></tr>
</tbody></table></div>
<div class="hscroll">◂</div>
<div class="line btns"><button>Freeze</button><button>Extract</button><button class="sq" aria-label="Más"></button></div>
<h2><em>−</em>Selection Display</h2>
<h3>Selection Labels</h3>
<div class="line labels"><button><svg><use href="#i-cell"/></svg>Cell Labels<span>▾</span></button><button aria-label="Etiquetas de punto"><span>▾</span></button></div>
<div class="line btns"><button><svg><use href="#i-gear"/></svg>Edit Label Properties</button></div>
<h3>Selection Appearance</h3>
<button class="swatch"><i class="magenta"></i>Selection Color</button>
<h3>Interactive Selection</h3>
<button class="swatch"><i class="violet"></i>Interactive Selection Color</button>
<button class="swatch right"><svg><use href="#i-gear"/></svg>Edit Interactive Label Properties</button>
<svg class="ink ink-right" viewBox="481 482 118 290">
<path d="M509 510q40-2 80-1v6q-40 2-80 1z" class="l-mag"/>
<ellipse cx="517" cy="521" rx="8" ry="5" class="l-blue"/><ellipse cx="559" cy="521" rx="13" ry="5" class="l-navy"/>
<text x="550" y="523" class="navy">Point</text><text x="524" y="541" class="blue">-1 a 11</text><text x="549" y="541" class="navy">-1 a 12</text>
<path d="M578 531l5 5m0-5l-5 5" class="l-gold"/>
<text x="558" y="549" class="gold">si no lo pones</text><text x="561" y="556" class="gold">aun no sepa</text><text x="566" y="563" class="gold">los días</text><text x="568" y="570" class="gold">activados</text>
<ellipse cx="519" cy="574" rx="19" ry="5" class="l-blue"/>
<text x="510" y="699" class="black">quitar que quieres que muestre</text>
<path d="M508 704l30 1 1 10-33-1z" class="l-blue"/><path d="M568 704h20l-1 11-20-1z" class="l-blue"/><text x="569" y="712" class="navy">Point</text>
<path d="M542 714l43 1-1 8h-44z" class="l-black"/>
<text x="542" y="730" class="black tall">Estas para que</text><text x="543" y="739" class="black tall">nota de un</text><text x="544" y="748" class="black tall">ataque epiléptico</text>
</svg>
</aside>
</div>
<div class="status"><button aria-label="Cerrar">×</button><div class="track"></div><div class="memory">DESKTOP-4H7: 10.3 GiB/13.7 GiB 75.4%</div><div class="rest"></div></div>
</section>
</main>
<footer>Advanced Strength of Materials página 1</footer>
<script src="bars.js"></script>
</body>
</html>
```
FILE: styles.css
```css
* { box-sizing: border-box; }
body { margin: 0; background: #fff; color: #444; font: 4px/5px "Liberation Sans", Arial, sans-serif; }
button, input, select { font: inherit; color: inherit; margin: 0; padding: 0; border: 0; border-radius: 0; background: none; min-width: 0; outline: 0; }
select { appearance: none; background: linear-gradient(#777, #777) right 3px center / 2px 1px no-repeat; }
h1, h2, h3, p, ul { margin: 0; padding: 0; }
a { color: inherit; text-decoration: none; }
svg { display: block; flex: none; }
.defs { position: absolute; width: 0; height: 0; }

.sheet {
  margin-top: 35px; padding: 1px 5px 27px 36px;
  display: flex; flex-direction: column;
  background-image: linear-gradient(#d8effa 1px, transparent 1px), linear-gradient(90deg, #d8effa 1px, transparent 1px);
  background-size: 14px 14px; background-position: 7px 0;
}
.note-head { height: 21px; }
h1 { font: 600 8px/12px "Open Sans", sans-serif; color: #000; }
.note-head p { display: flex; gap: 10px; font: 4px/8px "Open Sans", sans-serif; color: #888; }
footer { margin: 23px 0 7px 106px; font: 5px/10px "Liberation Serif", serif; color: #111; }

.window { position: relative; background: #f5f5f5; border: 1px solid #d8dbdc; border-width: 0 1px 1px 0; margin-bottom: 13px; }
.window:last-child { margin-bottom: 0; }
.titlebar { display: flex; align-items: center; height: 10px; padding-left: 3px; gap: 2px; background: linear-gradient(90deg, #f4f7f8, #f0fafe); border-top: 1px solid #dfe5e8; }
.titlebar > svg { width: 5px; height: 5px; }
.wincontrols { margin-left: auto; display: flex; padding-right: 6px; gap: 13px; }
.wincontrols svg { width: 5px; height: 5px; }
.menu { display: flex; gap: 4px; height: 8px; line-height: 8px; padding-left: 3px; background: #f8f9fa; }
.toolbar { display: flex; align-items: center; height: 13px; padding-left: 4px; background: linear-gradient(#fefefe, #f0f0f0); border-bottom: 1px solid #e3e3e3; }
.icons, [data-icons] { display: flex; align-items: center; }
.icons button { width: 11px; height: 12px; display: grid; place-items: center; }
.icons button.active { background: #dadada; }
.icons svg { width: 9px; height: 9px; }
.icons .gap, .small .gap { width: 3px; }
.icons .gap2 { width: 6px; }
.time { display: flex; align-items: center; gap: 2px; }
.time input { width: 23px; height: 6px; border: 1px solid #c6c6c6; padding-left: 1px; background: #fff; }
.s-step { width: 17px; height: 6px; margin: 0 2px 0 3px; border: 1px solid #c6c6c6; background-color: #fff; padding-left: 2px; }
.with-icon { display: flex; align-items: center; gap: 1px; height: 7px; padding-left: 2px; background: #fff; border: 1px solid #ddd; flex: 1; min-width: 0; }
.with-icon svg { width: 5px; height: 5px; }
.with-icon select { flex: 1; }
.s-array { flex: 0 0 42px; }
.s-comp { width: 20px; height: 7px; border: 1px solid #ddd; margin: 0 6px 0 3px; }
.s-repr { width: 46px; height: 7px; border: 1px solid #ddd; padding-left: 2px; }

.work { display: flex; align-items: stretch; }
.side { position: relative; flex: 0 0 128px; min-width: 0; margin-right: 3px; }
.dock { display: flex; align-items: center; height: 7px; padding: 0 1px; gap: 1px; }
.dock svg { width: 4px; height: 4px; }
.dock svg:first-of-type { margin-left: auto; }
.dock.low { height: 8px; }
.tree { list-style: none; height: 94px; background: #fff; padding-top: 1px; border-bottom: 1px solid #e2e2e2; }
.tree li { display: flex; align-items: center; height: 8px; gap: 3px; padding-left: 2px; }
.tree li > svg, .tree i { width: 4px; height: 4px; flex: none; }
.tree li > svg:nth-child(2) { margin-left: 4px; }
.tree b { display: flex; align-items: center; gap: 2px; height: 7px; width: 28px; margin-left: 4px; padding-left: 1px; background: #1785dc; color: #cfe8fb; font-weight: 400; }
.tree b svg { width: 4px; height: 5px; }
.tabs { display: flex; align-items: flex-end; height: 11px; }
.tabs button { height: 8px; width: 28px; background: #e5e5e5; border: 1px solid #dcdcdc; }
.tabs .on { width: 26px; height: 9px; background: #fff; border-bottom: 0; }
.actions { display: flex; gap: 1px; height: 10px; padding: 1px 5px 1px 3px; }
.actions button { flex: 1; display: flex; align-items: center; justify-content: center; gap: 2px; border: 1px solid #e4e4e4; background: #fafafa; color: #999; }
.actions svg { width: 4px; height: 4px; }
.actions .help { color: #7fa35d; font-size: 6px; }
.search { display: flex; height: 8px; padding-left: 3px; margin: 1px 0; }
.search input { flex: 1; background: #fff; border: 1px solid #ddd; padding-left: 1px; }
.search button { width: 9px; display: grid; place-items: center; }
.search svg { width: 5px; height: 5px; }
.props { margin: 0 6px 0 3px; padding-right: 2px; border-right: 1px solid #dedede; height: 148px; }
.sect { display: flex; gap: 3px; height: 10px; padding-bottom: 1px; }
.sect > button { flex: 1; display: flex; align-items: center; gap: 2px; padding-left: 3px; overflow: hidden; white-space: nowrap; font-weight: 700; background: #f0f0f0; border: 1px solid #dfdfdf; }
em { font: 700 7px/6px "Liberation Sans", sans-serif; color: #2b87bb; }
.sect div { gap: 1px; }
.sect div button { width: 10px; height: 9px; display: grid; place-items: center; border: 1px solid #e4e4e4; }
.sect svg { width: 6px; height: 6px; }
h3 { font: 700 4px/7px "Liberation Sans", sans-serif; height: 8px; color: #222; border-bottom: 1px solid #ddd; }
.row { display: grid; grid-template-columns: 29px 44px 1fr; align-items: center; height: 9px; gap: 1px; }
.row.wide { grid-template-columns: 29px 1fr; }
.row label { line-height: 4px; }
.row > input:not([type=range]), .row select { width: 100%; height: 8px; background-color: #fff; border: 1px solid #e4e4e4; padding-left: 1px; }
input[type=range] { appearance: none; width: 100%; height: 5px; background: linear-gradient(#2c92d5, #2c92d5) center / 100% 2px no-repeat; }
input[type=range]::-webkit-slider-thumb { appearance: none; width: 4px; height: 5px; background: #fff; border: 1px solid #bbb; border-radius: 1px; }
.check { display: flex; align-items: center; height: 8px; gap: 2px; }
.check input { appearance: none; width: 5px; height: 5px; background: #fff; border: 1px solid #d5d5d5; position: relative; }
.check input:checked::after { content: ""; position: absolute; left: 1px; top: -1px; width: 2px; height: 4px; border: solid #222; border-width: 0 1px 1px 0; transform: rotate(40deg); }
.color { display: flex; align-items: center; gap: 1px; width: 100%; height: 8px; border: 1px solid #ddd; background: #fff; }
.color i { width: 5px; height: 5px; border-radius: 50%; background: #0c127d; }
.color span, .labels span { margin-left: auto; padding-right: 1px; }

.center { flex: 1; min-width: 0; display: flex; flex-direction: column; }
.layouts { display: flex; height: 9px; background: #efefef; }
.layouts button { min-width: 20px; padding: 0 3px; display: flex; align-items: center; justify-content: center; gap: 1px; background: #ececec; border-right: 1px solid #dcdcdc; }
.layouts .on { background: #fff; }
.layouts svg { width: 6px; height: 6px; }
.viewbar { display: flex; align-items: center; height: 8px; background: #f6f6f6; }
.viewbar b { margin-left: auto; color: #222; font-weight: 700; padding-right: 3px; text-decoration: underline; }
.small button { width: 8px; height: 7px; display: grid; place-items: center; }
.small svg { width: 6px; height: 6px; }
.view { flex: 1 1 0; min-height: 0; border: 1px solid #7070d6; background: #54586f; }
.strong .view { border-color: #1b14e6; }
.view svg { width: 100%; height: 100%; }
.view text { fill: #d9dbe3; text-anchor: middle; font-size: 5px; }
.view .vals text { font-size: 4px; }

.status { display: flex; align-items: center; height: 10px; padding-right: 6px; }
.status button { margin-left: 184px; width: 6px; height: 6px; background: #eaeaea; }
.track { flex: 178; height: 7px; margin: 0 2px 0 1px; background: #fcfcfc; border: 1px solid #e8e8e8; }
.memory { flex: 141; height: 7px; line-height: 7px; background: #fb9c2b; color: #fff0d5; text-align: right; padding-right: 11px; white-space: nowrap; overflow: hidden; }
.rest { flex: 42; height: 7px; background: #fff; border: 1px solid #ddd; }
.memory.full { flex: 183; }

.toast { position: absolute; right: 2px; bottom: 0; width: 134px; border-radius: 3px; overflow: hidden; background: radial-gradient(circle at 55% 110%, #fae5d8, transparent 45%), #e4e7f1; font-size: 5px; line-height: 7px; padding-bottom: 8px; }
.thumb { width: 100%; height: 66px; }
.toast-head { display: flex; align-items: center; gap: 3px; padding: 5px 7px 7px 6px; }
.toast-head svg { width: 6px; height: 6px; }
.toast-head small { margin-left: auto; font-size: 5px; color: #999; padding-right: 6px; }
.toast-head button svg { width: 5px; height: 5px; }
.toast p { padding: 0 6px; color: #444; }
.toast .hint { color: #a5845f; }

.find { position: relative; flex: 0 0 114px; min-width: 0; margin-left: 3px; padding-right: 2px; }
.find h2 { display: flex; align-items: center; gap: 2px; padding-left: 5px; font: 700 4px/8px "Liberation Sans", sans-serif; color: #333; height: 8px; }
.find .dock + h2 { margin-top: 3px; }
.find h3, .line, .swatch { margin-left: 3px; }
.line { display: flex; align-items: center; gap: 2px; height: 9px; white-space: nowrap; }
.line > select, .line > input { flex: 1; height: 7px; background-color: #fff; border: 1px solid #e2e2e2; }
.line > .rng { flex: 0 0 34px; }
.line > .tiny { flex: 0 0 9px; }
.line > button { flex: 1; height: 8px; display: flex; align-items: center; justify-content: center; gap: 1px; background: #fcfcfc; border: 1px solid #e0e0e0; }
.line > .sq { flex: 0 0 8px; }
.line > .reset { justify-content: flex-start; }
.line .hot { border-color: #8fc0e6; }
.line svg, .swatch svg { width: 5px; height: 5px; }
.tablebox { margin-left: 3px; overflow: hidden; background: #fff; }
table { border-collapse: collapse; table-layout: fixed; width: 100%; }
th, td { padding: 0; font: 4px/11px "Liberation Sans", sans-serif; text-align: left; overflow: hidden; white-space: nowrap; }
th { line-height: 9px; color: #333; text-align: center; }
td { height: 11px; }
th:nth-child(1) { width: 5px; }
th:nth-child(2) { width: 13px; }
th:nth-child(3) { width: 21px; }
th:nth-child(4) { width: 17px; }
th:nth-child(5) { width: 25px; }
th:nth-child(6) { width: 16px; }
tbody tr:nth-child(even) { background: #efeee9; }
.hscroll { margin-left: 3px; height: 5px; background: #fff; border: 1px solid #ddd; line-height: 3px; }
.swatch { display: flex; align-items: center; gap: 1px; height: 8px; }
.swatch i { width: 5px; height: 5px; border-radius: 50%; }
.swatch.right { margin: 1px 2px 0 auto; }
.magenta { background: #f800f0; }
.violet { background: #6a08f5; }
.labels { padding-left: 24px; }
.labels > button:last-child { flex: 0 0 26px; }

.ink { position: absolute; left: 0; top: 0; pointer-events: none; fill: none; overflow: visible; }
.ink-left { width: 128px; height: 290px; }
.ink-right { width: 118px; height: 290px; }
.ink text { font: italic 5px "Liberation Sans", sans-serif; }
.ink-left text { font-size: 8px; }
.ink .mag { fill: #a3209c; }
.ink .bold { font-weight: 700; }
.ink text.big { font-size: 10px; }
.ink .pink { fill: #f299c2; }
.ink .blue { fill: #4a9ed4; }
.ink .navy { fill: #1d5f93; font-size: 7px; }
.ink .gold { fill: #efa62b; }
.ink .black { fill: #111; font-size: 6px; }
.ink .tall { font-size: 7px; }
.l-mag { stroke: #bb3aae; }
.l-pink { stroke: #f6a3c8; }
.l-blue { stroke: #45a0da; }
.l-navy { stroke: #24699a; }
.l-gold { stroke: #efb13e; }
.l-black { stroke: #333; }
```
FILE: bars.js
```js
// Expands each data-icons list into icon buttons; "|" and "||" are gaps, "*" marks a pressed button.
const NS = "http://www.w3.org/2000/svg";
document.querySelectorAll("[data-icons]").forEach((bar) => {
  bar.dataset.icons.split(" ").forEach((item) => {
    if (item[0] === "|") {
      const gap = document.createElement("span");
      gap.className = item === "|" ? "gap" : "gap2";
      bar.append(gap);
      return;
    }
    const name = item.replace("*", "");
    const button = document.createElement("button");
    button.type = "button";
    button.setAttribute("aria-label", name);
    if (item !== name) button.className = "active";
    const svg = document.createElementNS(NS, "svg");
    const use = document.createElementNS(NS, "use");
    use.setAttribute("href", "#i-" + name);
    svg.append(use);
    button.append(svg);
    bar.append(button);
  });
});
```
